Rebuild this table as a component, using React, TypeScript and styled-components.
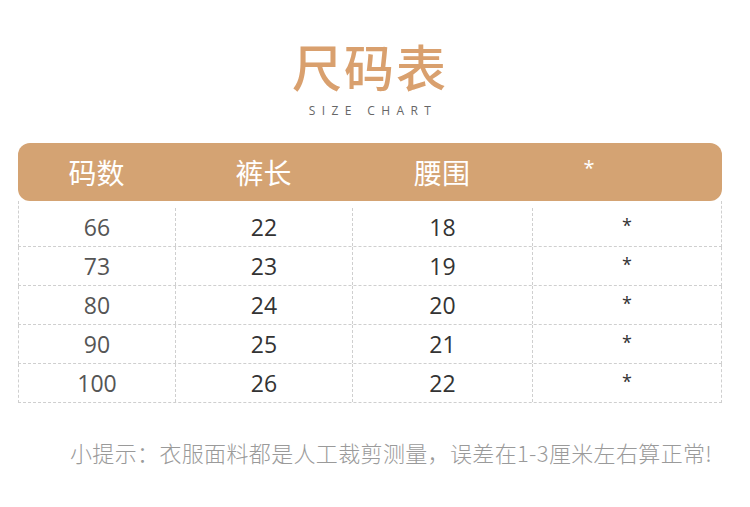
import React from 'react'
import styled, { createGlobalStyle } from 'styled-components'

const GlobalStyle = createGlobalStyle`
  html, body {
    margin: 0;
    padding: 0;
    background: #ffffff;
  }
  body {
    font-family: 'Noto Sans CJK SC', 'Noto Sans', sans-serif;
  }
`

const headers = ['码数', '裤长', '腰围', '*']

const rows = [
  ['66', '22', '18', '*'],
  ['73', '23', '19', '*'],
  ['80', '24', '20', '*'],
  ['90', '25', '21', '*'],
  ['100', '26', '22', '*'],
]

export default function App() {
  return (
    <>
      <GlobalStyle />
      <Page>
        <TitleBlock>
          <Title>尺码表</Title>
          <SubTitle>SIZE CHART</SubTitle>
        </TitleBlock>

        <Table>
          <HeaderBar>
            {headers.map((h, i) => (
              <HeadCell key={i} $star={h === '*'}>
                {h}
              </HeadCell>
            ))}
          </HeaderBar>

          {rows.map((row, r) => (
            <Row key={r} $first={r === 0}>
              {row.map((cell, c) => (
                <Cell key={c} $col={c} $star={cell === '*'}>
                  {cell}
                </Cell>
              ))}
            </Row>
          ))}
        </Table>

        <Tip>小提示：衣服面料都是人工裁剪测量，误差在1-3厘米左右算正常!</Tip>
      </Page>
    </>
  )
}

const COLS = '157px 177px 180px 1fr'

const Page = styled.div`
  width: 750px;
  height: 507px;
  padding: 38px 28px 0 18px;
  box-sizing: border-box;
  display: flex;
  flex-direction: column;
`

const TitleBlock = styled.div`
  display: flex;
  flex-direction: column;
  align-items: center;
  gap: 11px;
`

const Title = styled.h1`
  margin: 0;
  font-family: 'Noto Sans CJK SC', sans-serif;
  font-weight: 500;
  font-size: 50px;
  line-height: 54px;
  letter-spacing: 2px;
  color: #d9a06e;
`

const SubTitle = styled.div`
  font-family: 'Open Sans', 'Liberation Sans', sans-serif;
  font-size: 12px;
  line-height: 16px;
  letter-spacing: 6.4px;
  padding-left: 6px;
  color: #666666;
`

const Table = styled.div`
  margin-top: 24px;
  display: flex;
  flex-direction: column;
`

const HeaderBar = styled.div`
  display: grid;
  grid-template-columns: ${COLS};
  height: 58px;
  align-items: center;
  background: #d4a373;
  border-radius: 12px;
`

const HeadCell = styled.div<{ $star?: boolean }>`
  text-align: center;
  color: #ffffff;
  font-family: 'Noto Sans CJK SC', sans-serif;
  font-size: 28px;
  line-height: 36px;
  ${({ $star }) =>
    $star &&
    `
    font-family: 'Open Sans', sans-serif;
    font-size: 20px;
    transform: translate(-38px, -4px);
  `}
`

const Row = styled.div<{ $first?: boolean }>`
  display: grid;
  grid-template-columns: ${COLS};
  height: ${({ $first }) => ($first ? '46px' : '39px')};
  padding-top: ${({ $first }) => ($first ? '7px' : '0')};
  box-sizing: border-box;
  border-left: 1px dashed #cfcfcf;
  border-right: 1px dashed #cfcfcf;
  border-bottom: 1px dashed #cfcfcf;
`

const Cell = styled.div<{ $col: number; $star?: boolean }>`
  display: flex;
  align-items: center;
  justify-content: center;
  font-family: 'Open Sans', 'Noto Sans', sans-serif;
  font-size: 23px;
  color: ${({ $col }) => ($col === 0 ? '#555555' : '#333333')};
  border-right: ${({ $col }) => ($col < 3 ? '1px dashed #cfcfcf' : 'none')};
  ${({ $star }) =>
    $star &&
    `
    font-size: 18px;
    color: #333333;
    padding-bottom: 4px;
  `}
`

const Tip = styled.div`
  margin-top: 34px;
  padding-left: 52px;
  font-family: 'Noto Sans CJK SC', sans-serif;
  font-weight: 300;
  font-size: 22px;
  line-height: 30px;
  letter-spacing: 0.35px;
  color: #9a9a9a;
  white-space: nowrap;
`
